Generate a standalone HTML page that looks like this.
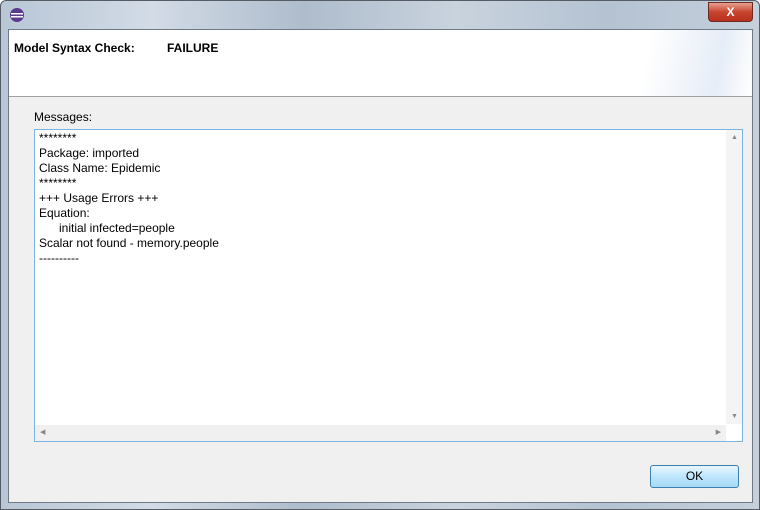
<!DOCTYPE html>
<html><head><style>
body{margin:0;width:760px;height:510px;overflow:hidden;font-family:"Liberation Sans",sans-serif;}
.frame{position:absolute;left:0;top:0;width:758px;height:508px;border:1px solid #555c66;border-radius:6px 6px 0 0;background:linear-gradient(90deg,#b8c6d6 0%,#d2dbe6 20%,#aebccc 40%,#c9d3de 60%,#b4c2d2 80%,#c5d0dc 100%);}
.client{position:absolute;left:7px;top:28px;width:743px;height:472px;border:1px solid #6f7a87;background:#f0f0f0;}
.head{position:absolute;left:0;top:0;width:743px;height:66px;background:linear-gradient(100deg,#fff 85%,#e6edf7 95%,#fff 100%);border-bottom:1px solid #a0a0a0;}
.t{position:absolute;font-size:12px;color:#000;}
.box{position:absolute;left:25px;top:99px;width:707px;height:311px;border:1px solid #7eb4e3;background:#fff;}
.txt{position:absolute;left:4px;top:1px;font-size:12px;line-height:15px;white-space:pre;color:#000;}
.vs{position:absolute;right:0;top:0;width:16px;height:294px;background:#f4f4f4;}
.hs{position:absolute;left:0;bottom:0;width:691px;height:16px;background:#f0f0f0;}
.ok{position:absolute;left:641px;top:435px;width:87px;height:21px;border:1px solid #3c7fb1;border-radius:3px;background:linear-gradient(#eaf6fd,#bee6fd 50%,#a7d9f5);text-align:center;line-height:21px;font-size:12px;}
.close{position:absolute;left:707px;top:1px;width:43px;height:18px;border:1px solid #6b2a22;border-radius:0 0 4px 4px;background:linear-gradient(#e8a08f,#c7452f 50%,#b8301c);color:#fff;font-weight:bold;text-align:center;font-size:12px;line-height:18px;}
</style></head><body>
<div class="frame">
<svg style="position:absolute;left:8px;top:6px" width="16" height="16"><circle cx="8" cy="8" r="7" fill="#5a3a8a"/><rect x="2" y="6" width="12" height="1.5" fill="#fff"/><rect x="2" y="9" width="12" height="1.5" fill="#fff"/></svg>
<div class="close">X</div>
<div class="client">
<div class="head">
<div class="t" style="left:5px;top:11px;font-weight:bold">Model Syntax Check:</div>
<div class="t" style="left:158px;top:11px;font-weight:bold">FAILURE</div>
</div>
<div class="t" style="left:25px;top:80px">Messages:</div>
<div class="box">
<div class="txt">********
Package: imported
Class Name: Epidemic
********
+++ Usage Errors +++
Equation:
      initial infected=people
Scalar not found - memory.people
----------</div>
<div class="vs"><span style="position:absolute;left:5px;top:4px;font-size:7px;color:#888">▲</span><span style="position:absolute;left:5px;bottom:4px;font-size:7px;color:#888">▼</span></div>
<div class="hs"><span style="position:absolute;left:5px;top:3px;font-size:7px;color:#888">◀</span><span style="position:absolute;right:5px;top:3px;font-size:7px;color:#888">▶</span></div>
</div>
<div class="ok">OK</div>
</div>
</div>
</body></html>
